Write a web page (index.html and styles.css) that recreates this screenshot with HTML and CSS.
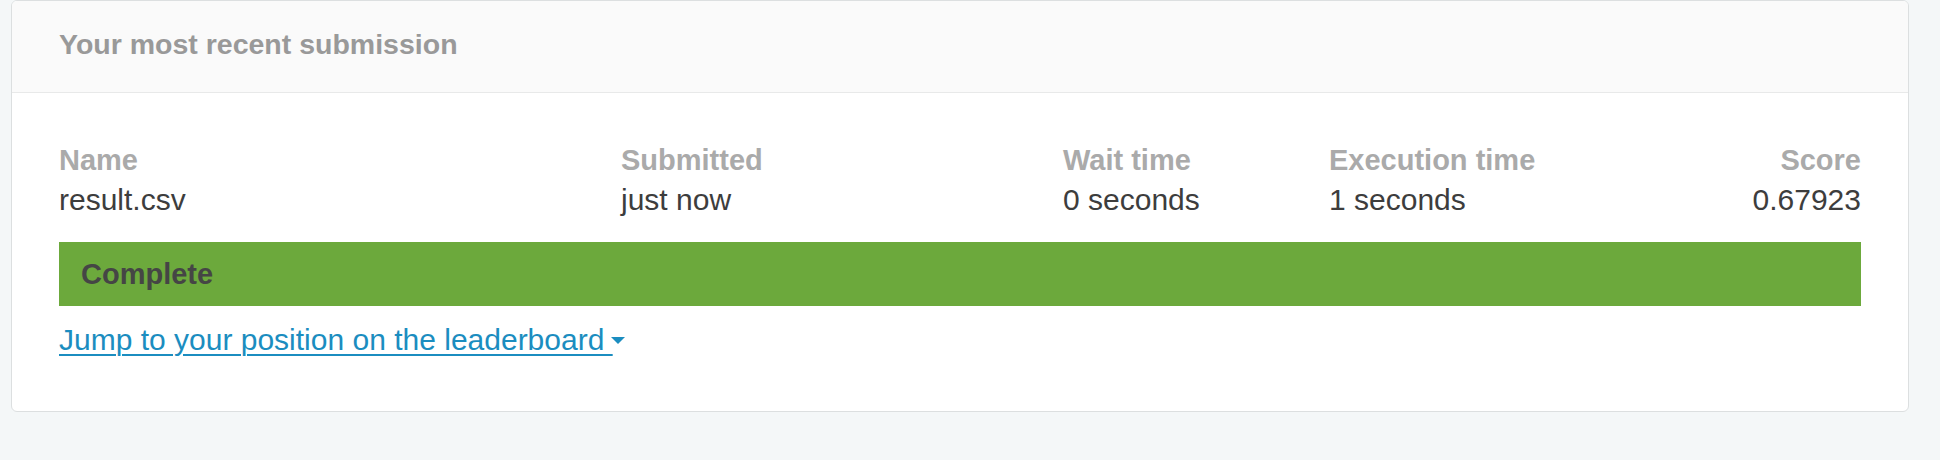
FILE: index.html
```html
<!DOCTYPE html>
<html lang="en">
<head>
<meta charset="utf-8">
<title>Your most recent submission</title>
<link rel="stylesheet" href="styles.css">
</head>
<body>
  <section class="card">
    <header class="card-header">Your most recent submission</header>
    <div class="card-body">
      <div class="sub-grid">
        <div class="label">Name</div>
        <div class="label">Submitted</div>
        <div class="label">Wait time</div>
        <div class="label">Execution time</div>
        <div class="label right">Score</div>
        <div class="value">result.csv</div>
        <div class="value">just now</div>
        <div class="value">0 seconds</div>
        <div class="value">1 seconds</div>
        <div class="value right">0.67923</div>
      </div>
      <div class="status">Complete</div>
      <a class="jump" href="#">Jump to your position on the leaderboard <span class="caret"></span></a>
    </div>
  </section>
</body>
</html>
```

FILE: styles.css
```css
html, body {
  margin: 0;
  padding: 0;
}
body {
  background: #f4f7f8;
  font-family: "Liberation Sans", Arial, sans-serif;
  font-size: 30px;
  line-height: 40px;
  color: #3d3d3d;
  padding: 0 31px 0 11px;
  height: 460px;
  box-sizing: border-box;
}
.card {
  background: #ffffff;
  border: 1px solid #dcdfe0;
  border-radius: 6px;
  overflow: hidden;
}
.card-header {
  background: #fafafa;
  border-bottom: 1px solid #e8e9e9;
  color: #999999;
  font-size: 28.5px;
  font-weight: bold;
  padding: 23px 47px 28px;
  height: 40px;
}
.card-body {
  padding: 47px 47px 51px;
}
.sub-grid {
  display: grid;
  grid-template-columns: 562px 442px 266px 1fr auto;
}
.label {
  color: #aaaaaa;
  font-size: 29px;
  font-weight: bold;
}
.value {
  color: #3d3d3d;
}
.right {
  text-align: right;
}
.status {
  margin-top: 22px;
  background: #6ca93c;
  color: #454545;
  font-size: 29px;
  font-weight: bold;
  height: 64px;
  line-height: 64px;
  padding: 0 22px;
}
.jump {
  display: inline-block;
  margin-top: 14px;
  color: #1b8dc0;
  text-decoration: underline;
  text-underline-offset: 4px;
  text-decoration-thickness: 2px;
}
.caret {
  display: inline-block;
  width: 0;
  height: 0;
  border-left: 7px solid transparent;
  border-right: 7px solid transparent;
  border-top: 7px solid #1b8dc0;
  vertical-align: 6px;
  margin-left: -2px;
}
```
